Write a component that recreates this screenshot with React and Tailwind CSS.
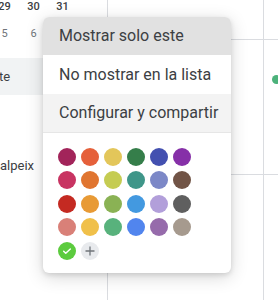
import React from 'react';

// Google-calendar style colour palette, row by row
const colors = [
  ['#a2245a', '#e5603a', '#e3c65a', '#357e4a', '#4350b0', '#8630a8'],
  ['#c83462', '#e07530', '#c5cc52', '#3f9689', '#7c88c7', '#715446'],
  ['#c42a22', '#e89a35', '#8ab254', '#4399e0', '#b29fda', '#5f5f5f'],
  ['#d98078', '#f0c04a', '#58b27c', '#5185ee', '#966bab', '#a69a8e'],
];

const MenuItem = ({ label, className }) => (
  <div className={`flex items-center pl-4 text-[16px] text-[#3c4043] ${className}`}>
    {label}
  </div>
);

const App = () => {
  return (
    <div className="relative w-[278px] h-[300px] overflow-hidden bg-white flex font-['Roboto',sans-serif]">
      {/* --- Sidebar --- */}
      <div className="w-[108px] shrink-0 border-r border-[#dadce0] flex flex-col">
        <div className="flex -ml-[10px] -mt-[6px] h-[27px] items-center text-[11px] font-medium text-[#3c4043]">
          <span className="w-[29px] text-center">29</span>
          <span className="w-[29px] text-center">30</span>
          <span className="w-[29px] text-center">31</span>
        </div>
        <div className="flex -ml-[10px] h-[27px] items-center text-[11px] text-[#70757a]">
          <span className="w-[29px] text-center">5</span>
          <span className="w-[29px] text-center">6</span>
        </div>
        <div className="mt-[10px] h-[37px] bg-[#f1f3f4] flex items-center text-[13px] text-[#3c4043]">
          <span className="-ml-px">te</span>
        </div>
        <div className="mt-[52px] h-[37px] flex items-center text-[13px] text-[#3c4043]">
          <span>alpeix</span>
        </div>
      </div>

      {/* --- Calendar grid --- */}
      <div className="flex-1 grid grid-cols-[156px_1fr] grid-rows-[40px_135px_1fr]">
        <div className="border-r border-b border-[#dadce0]" />
        <div className="border-b border-[#dadce0]" />
        <div className="border-r border-b border-[#dadce0]" />
        <div className="border-b border-[#dadce0] pl-[8px] pt-[35px]">
          <div className="w-[9px] h-[9px] rounded-full bg-[#4cb27b]" />
        </div>
        <div className="border-r border-[#dadce0]" />
        <div />
      </div>

      {/* --- Context menu --- */}
      <div className="absolute left-[43px] top-[17px] w-[188px] h-[256px] bg-white rounded-[6px] overflow-hidden shadow-[0_4px_18px_rgba(0,0,0,0.16),0_2px_5px_rgba(0,0,0,0.12)]">
        <MenuItem label="Mostrar solo este" className="h-[38px] bg-[#e1e1e1]" />
        <MenuItem label="No mostrar en la lista" className="h-[39px]" />
        <MenuItem label="Configurar y compartir" className="h-[39px] bg-[#f3f3f3] border-b border-[#e6e6e6]" />

        <div className="pl-[15px] pt-[15px] flex flex-col gap-y-[5.4px]">
          {colors.map((row, i) => (
            <div key={i} className="flex gap-x-[5px]">
              {row.map((c) => (
                <div key={c} className="w-[18px] h-[18px] rounded-full" style={{ backgroundColor: c }} />
              ))}
            </div>
          ))}
          <div className="flex gap-x-[5px]">
            <div className="w-[18px] h-[18px] rounded-full bg-[#5ccb3e] flex items-center justify-center">
              <svg width="10" height="10" viewBox="0 0 24 24" fill="none" stroke="white" strokeWidth="3.5" strokeLinecap="round" strokeLinejoin="round">
                <path d="M4 12.5l5 5L20 7" />
              </svg>
            </div>
            <div className="w-[18px] h-[18px] rounded-full bg-[#e8eaed] flex items-center justify-center">
              <svg width="10" height="10" viewBox="0 0 10 10" stroke="#70757a" strokeWidth="1.3">
                <path d="M5 0.5v9M0.5 5h9" />
              </svg>
            </div>
          </div>
        </div>
      </div>
    </div>
  );
};

export default App;
